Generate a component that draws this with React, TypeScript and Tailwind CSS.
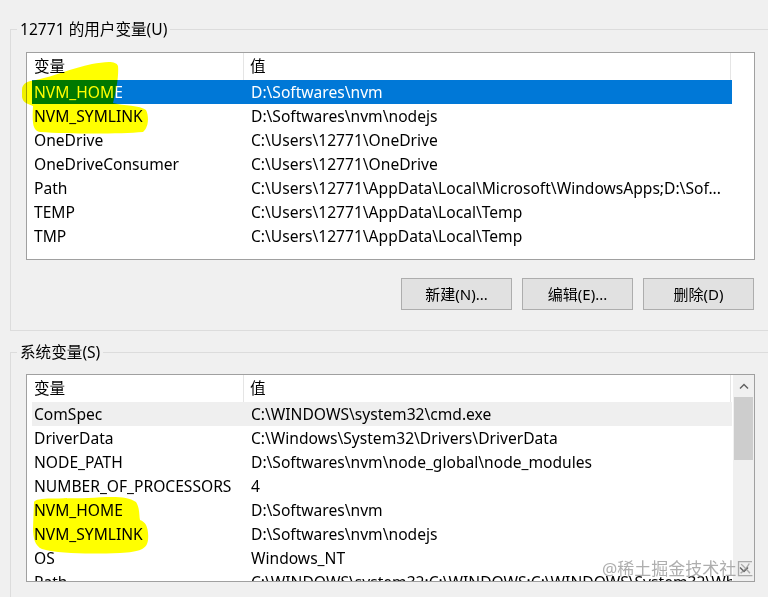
import React from "react";

const USER_VARS: [string, string][] = [
  ["NVM_HOME", "D:\\Softwares\\nvm"],
  ["NVM_SYMLINK", "D:\\Softwares\\nvm\\nodejs"],
  ["OneDrive", "C:\\Users\\12771\\OneDrive"],
  ["OneDriveConsumer", "C:\\Users\\12771\\OneDrive"],
  ["Path", "C:\\Users\\12771\\AppData\\Local\\Microsoft\\WindowsApps;D:\\Sof..."],
  ["TEMP", "C:\\Users\\12771\\AppData\\Local\\Temp"],
  ["TMP", "C:\\Users\\12771\\AppData\\Local\\Temp"],
];

const SYS_VARS: [string, string][] = [
  ["ComSpec", "C:\\WINDOWS\\system32\\cmd.exe"],
  ["DriverData", "C:\\Windows\\System32\\Drivers\\DriverData"],
  ["NODE_PATH", "D:\\Softwares\\nvm\\node_global\\node_modules"],
  ["NUMBER_OF_PROCESSORS", "4"],
  ["NVM_HOME", "D:\\Softwares\\nvm"],
  ["NVM_SYMLINK", "D:\\Softwares\\nvm\\nodejs"],
  ["OS", "Windows_NT"],
  ["Path", "C:\\WINDOWS\\system32;C:\\WINDOWS;C:\\WINDOWS\\System32\\Wbem;C:\\WIN..."],
];

function Header() {
  return (
    <div className="flex h-[27px] shrink-0 items-center">
      <div className="flex h-full w-[217px] items-center border-r border-[#e5e5e5] pl-[7px] pt-[1px]">变量</div>
      <div className="flex h-full w-[487px] items-center border-r border-[#e5e5e5] pl-[6px] pt-[1px]">值</div>
    </div>
  );
}

function Row({ name, value, state }: { name: string; value: string; state?: "selected" | "hover" }) {
  const bg = state === "selected" ? "bg-[#0078d7] text-white" : state === "hover" ? "bg-[#efefef]" : "";
  return (
    <div className={`ml-[5px] flex h-[24px] w-[700px] shrink-0 items-center whitespace-nowrap pt-[2px] ${bg}`}>
      <div className="w-[212px] overflow-hidden pl-[2px]">{name}</div>
      <div className="w-[488px] overflow-hidden pl-[7px]">{value}</div>
    </div>
  );
}

function Button({ label }: { label: string }) {
  return (
    <button className="flex h-[32px] w-[111px] items-center justify-center border border-[#adadad] bg-[#e1e1e1] text-[15px] text-black">
      {label}
    </button>
  );
}

function Group({ title, className, children }: { title: string; className: string; children: React.ReactNode }) {
  return (
    <div className={`relative w-[800px] border-l border-t border-[#dcdcdc] ${className}`}>
      <div className="absolute left-[6px] top-[-11px] bg-[#f0f0f0] px-[3px] leading-[20px]">{title}</div>
      {children}
    </div>
  );
}

export default function App() {
  return (
    <div
      className="relative h-[597px] w-[768px] overflow-hidden bg-[#f0f0f0] pl-[10px] pt-[29px] text-[15.6px] text-black"
      style={{ fontFamily: '"Noto Sans", "Noto Sans CJK SC", sans-serif' }}
    >
      <Group title="12771 的用户变量(U)" className="h-[302px] border-b">
        <div className="ml-[15px] mt-[22px] flex h-[208px] w-[729px] flex-col border border-[#a0a0a0] bg-white">
          <Header />
          {USER_VARS.map(([n, v], i) => (
            <Row key={n} name={n} value={v} state={i === 0 ? "selected" : undefined} />
          ))}
        </div>
        <div className="ml-[15px] mt-[18px] flex w-[729px] justify-end gap-[10px] pr-[1px]">
          <Button label="新建(N)..." />
          <Button label="编辑(E)..." />
          <Button label="删除(D)" />
        </div>
      </Group>

      <Group title="系统变量(S)" className="mt-[21px] h-[260px]">
        <div className="ml-[15px] mt-[21px] flex h-[208px] w-[729px] overflow-hidden border border-[#a0a0a0] bg-white">
          <div className="flex w-[706px] flex-col overflow-hidden">
            <Header />
            {SYS_VARS.map(([n, v], i) => (
              <Row key={n} name={n} value={v} state={i === 0 ? "hover" : undefined} />
            ))}
          </div>
          <div className="flex w-[21px] flex-col bg-[#f0f0f0]">
            <div className="flex h-[22px] items-center justify-center">
              <svg width="10" height="6" viewBox="0 0 10 6">
                <path d="M1 5.5 L5 1.5 L9 5.5" fill="none" stroke="#606060" strokeWidth="1.4" />
              </svg>
            </div>
            <div className="mx-[1px] h-[63px] bg-[#cdcdcd]" />
            <div className="flex-1" />
            <div className="flex h-[22px] items-center justify-center">
              <svg width="10" height="6" viewBox="0 0 10 6">
                <path d="M1 0.5 L5 4.5 L9 0.5" fill="none" stroke="#606060" strokeWidth="1.4" />
              </svg>
            </div>
          </div>
        </div>
      </Group>

      {/* marker strokes */}
      <svg className="pointer-events-none absolute left-0 top-0 mix-blend-multiply" width="768" height="597" viewBox="0 0 768 597">
        <path
          d="M22 90 C22 83 28 81 36 80 C55 76 72 68 92 64 C104 62 116 60 118 66 C119 76 116 92 113 103 C124 106 140 105 146 110 C149 116 149 127 143 132 C120 134 70 134 40 132 C33 131 32 124 33 106 C28 104 23 103 22 97 Z"
          fill="#ffff00"
        />
        <path
          d="M34 502 C36 497 60 499 88 498 C108 497 126 495 136 502 C140 508 139 516 140 520 C146 522 149 528 148 540 C147 549 140 552 120 553 C90 554 60 554 42 549 C35 546 33 538 33 528 Z"
          fill="#ffff00"
        />
      </svg>

      <div className="pointer-events-none absolute left-[602px] top-[557px] text-[17px] leading-[24px] text-[#8c8c8c]/70">
        @稀土掘金技术社区
      </div>
    </div>
  );
}
